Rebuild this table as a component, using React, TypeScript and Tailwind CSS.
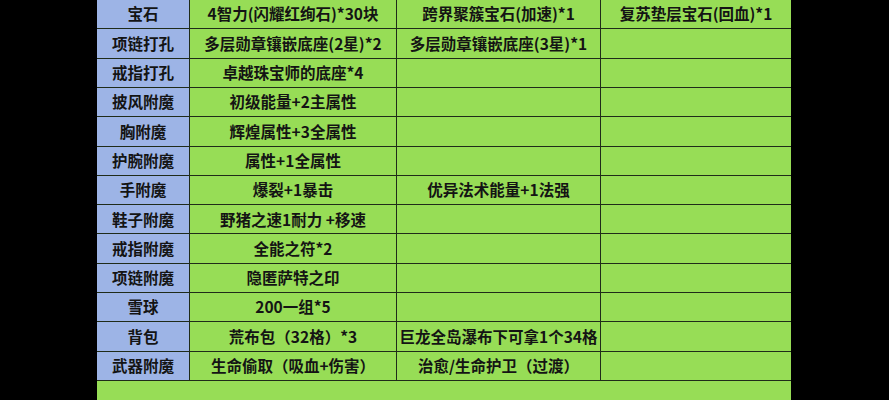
const rows: [string, string, string, string][] = [
  ["宝石", "4智力(闪耀红绚石)*30块", "跨界聚簇宝石(加速)*1", "复苏垫层宝石(回血)*1"],
  ["项链打孔", "多层勋章镶嵌底座(2星)*2", "多层勋章镶嵌底座(3星)*1", ""],
  ["戒指打孔", "卓越珠宝师的底座*4", "", ""],
  ["披风附魔", "初级能量+2主属性", "", ""],
  ["胸附魔", "辉煌属性+3全属性", "", ""],
  ["护腕附魔", "属性+1全属性", "", ""],
  ["手附魔", "爆裂+1暴击", "优异法术能量+1法强", ""],
  ["鞋子附魔", "野猪之速1耐力 +移速", "", ""],
  ["戒指附魔", "全能之符*2", "", ""],
  ["项链附魔", "隐匿萨特之印", "", ""],
  ["雪球", "200一组*5", "", ""],
  ["背包", "荒布包（32格）*3", "巨龙全岛瀑布下可拿1个34格", ""],
  ["武器附魔", "生命偷取（吸血+伤害）", "治愈/生命护卫（过渡）", ""],
];

export default function App() {
  return (
    <div className="h-[400px] w-[889px] overflow-hidden bg-black font-['Noto_Sans_CJK_SC','Noto_Sans',sans-serif]">
      <div className="ml-[97px] flex h-full w-[694px] flex-col bg-[#97dd56]">
        <div className="grid h-[381px] grid-cols-[92px_206px_203px_190px] grid-rows-[repeat(13,1fr)] gap-px bg-[#1f2b19] pb-px">
          {rows.map((r, i) =>
            r.map((cell, j) => (
              <div
                key={`${i}-${j}`}
                className={`flex items-center justify-center whitespace-nowrap text-[15.5px] font-bold leading-none text-[#141414] ${
                  j === 0 ? "bg-[#9db4e6]" : "bg-[#97dd56]"
                }`}
              >
                {cell}
              </div>
            ))
          )}
        </div>
      </div>
    </div>
  );
}
